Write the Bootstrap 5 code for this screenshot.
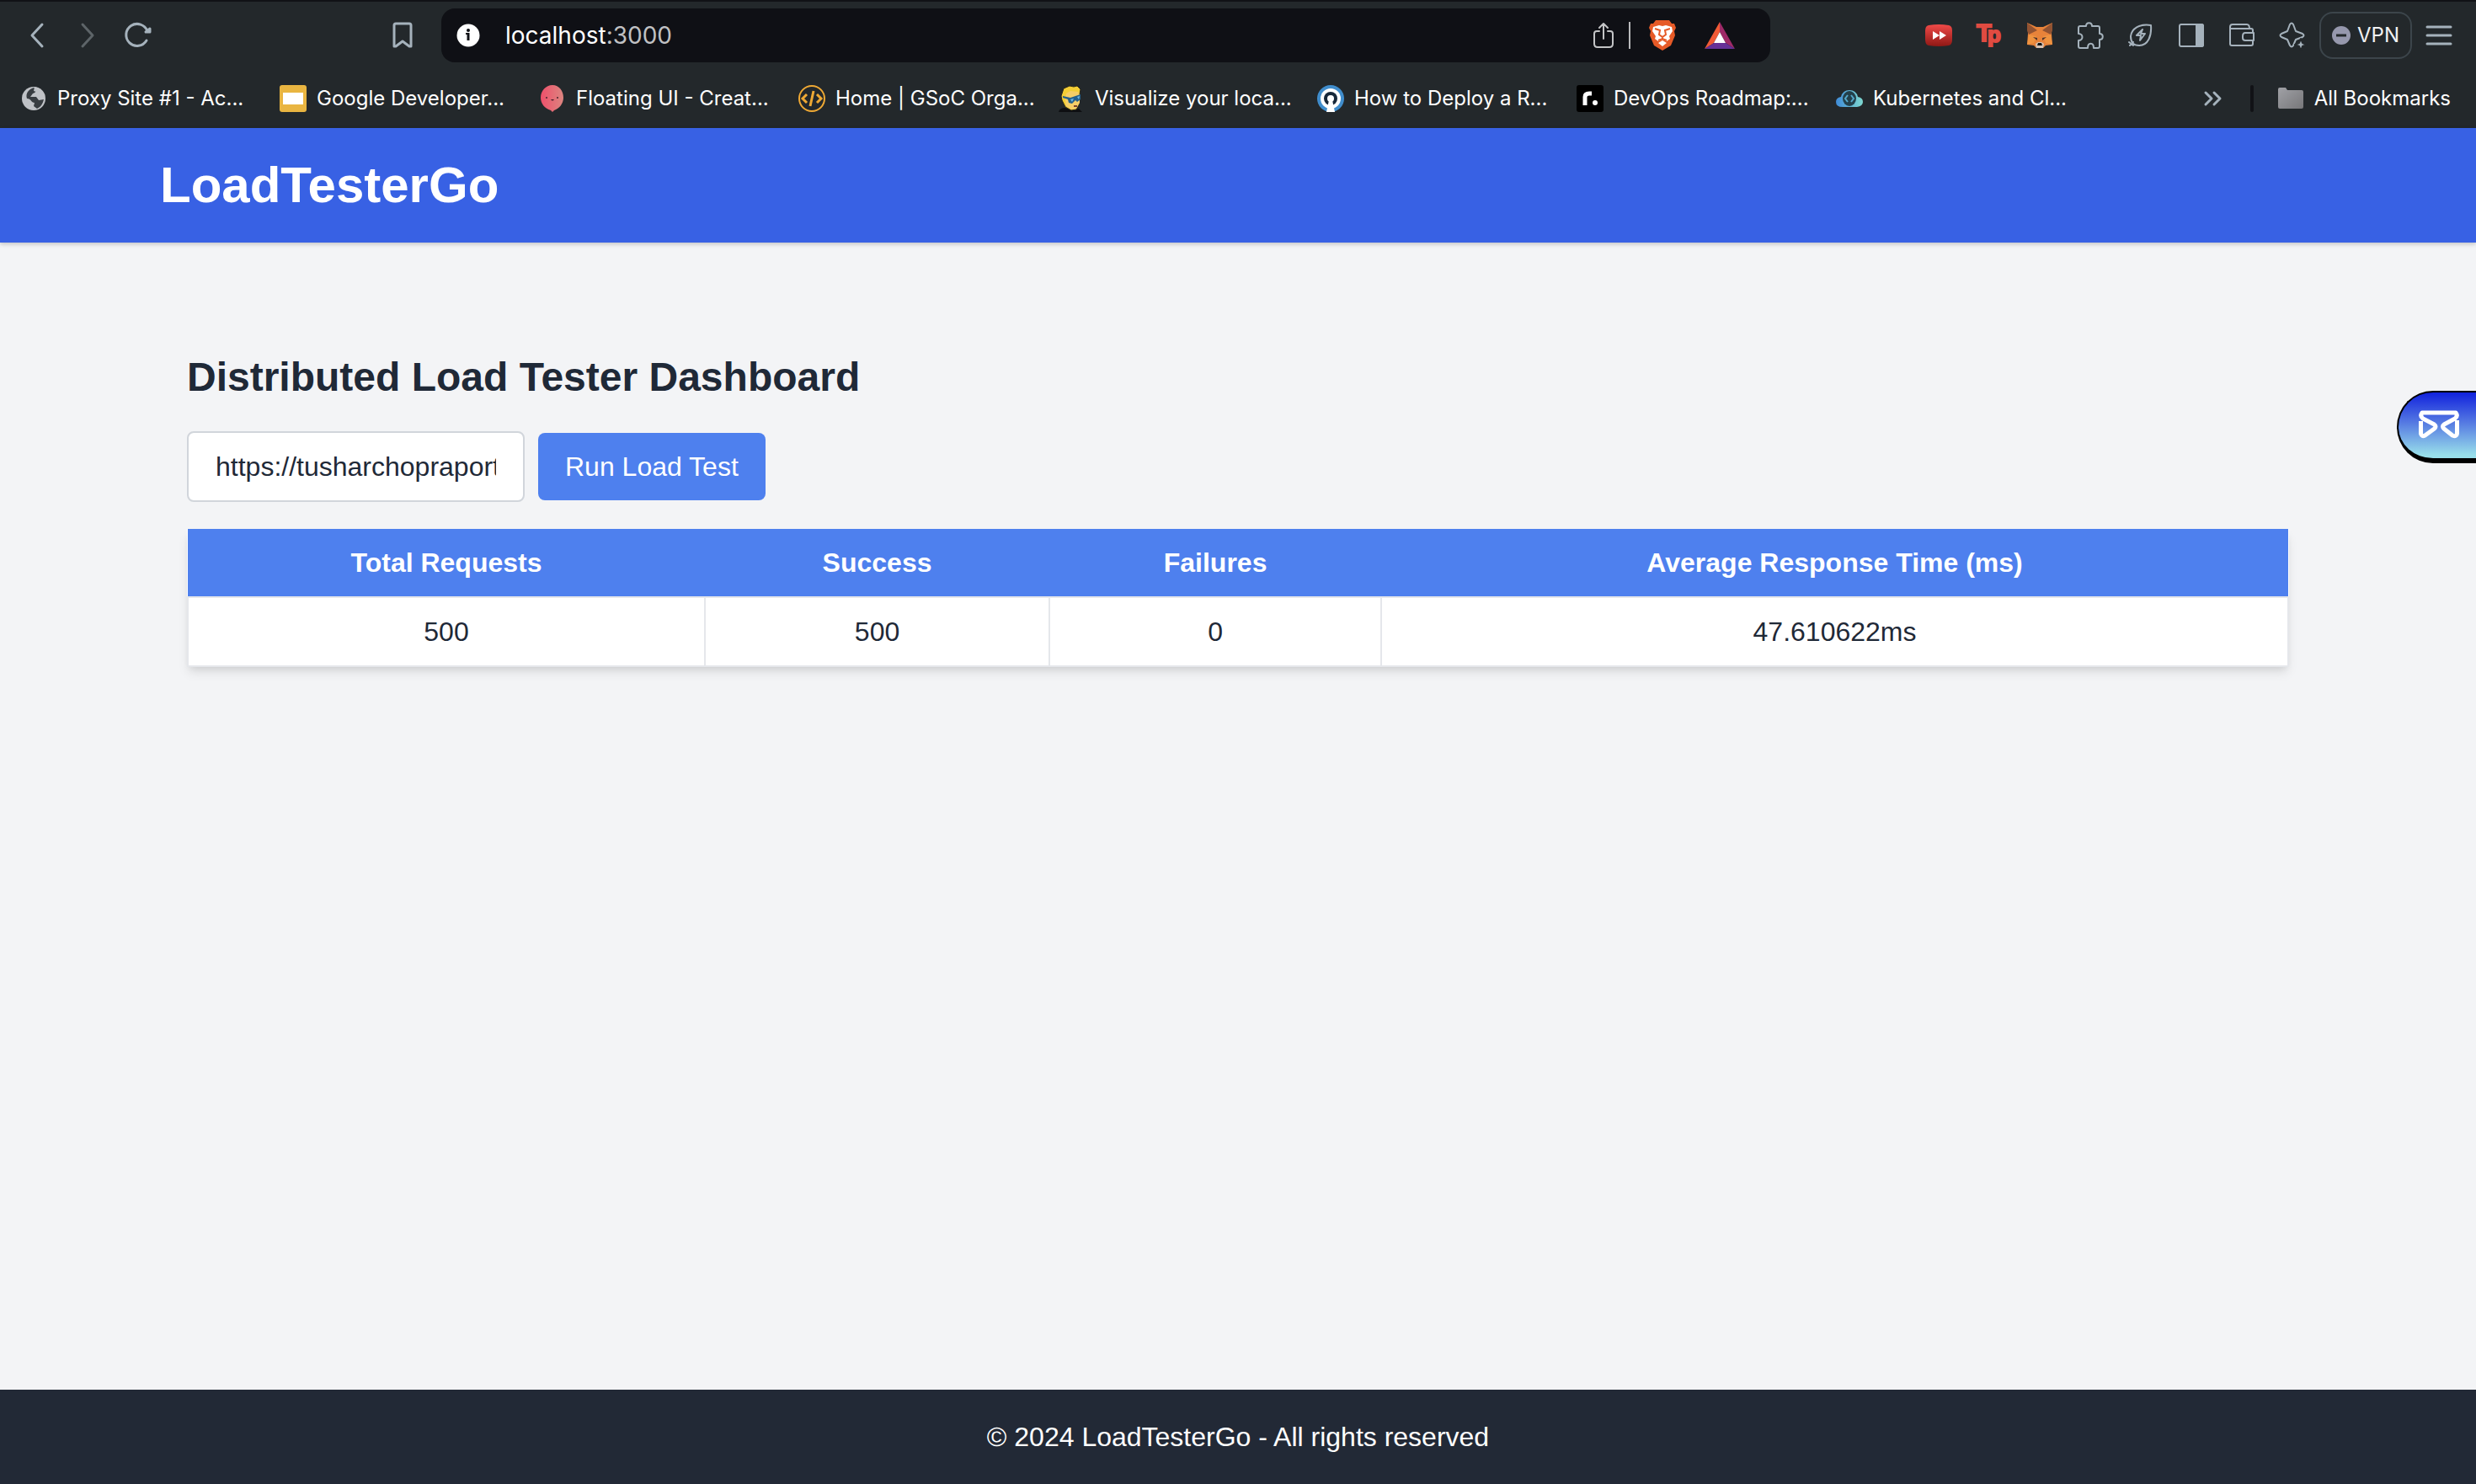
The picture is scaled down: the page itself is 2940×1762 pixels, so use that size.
<!DOCTYPE html>
<html lang="en">
<head>
<meta charset="utf-8">
<meta name="viewport" content="width=device-width, initial-scale=1">
<title>LoadTesterGo</title>
<link href="https://cdn.jsdelivr.net/npm/bootstrap@5.3.0/dist/css/bootstrap.min.css" rel="stylesheet">
<style>
  body { font-family: "Liberation Sans", Arial, sans-serif; font-size: 32px; line-height: 48px; color: #1f2937; background: #f3f4f6; }
  svg { display: block; flex: none; overflow: visible; }

  /* Browser chrome */
  .browser-ui { font-family: Inter, sans-serif; background: #23282b; border-top: 2px solid #111216; color: #fff; font-size: 24px; line-height: 32px; }
  .toolbar { height: 80px; }
  .nav-tools { flex: 0 0 524px; padding: 0 16px 0 14px; }
  .ext-tools { flex: 0 0 838px; padding-right: 14px; }
  .tool-btn { width: 60px; height: 60px; padding: 0; border: 0; background: none; color: #a5b2bc; display: flex; align-items: center; justify-content: center; }
  .tool-btn:disabled { color: #5d6468; }
  .line-art { fill: none; stroke: currentColor; stroke-width: 2; stroke-linecap: round; stroke-linejoin: round; }
  .line-bold { stroke-width: 3; }
  .address { height: 64px; border-radius: 16px; background: #0f1015; padding: 0 30px 0 16px; font-size: 28px; }
  .address .host { margin-left: 28px; }
  .address .port { color: #c0c1c3; }
  .address .rule { width: 2px; height: 32px; background: #b8b9bb; }
  .vpn-btn { width: 110px; height: 56px; margin: 0 2px; padding: 0; border: 2px solid #3c454b; border-radius: 16px; background: none; color: #f0f1f2; font-size: 24px; gap: 8px; }
  .bookmarks { height: 70px; padding: 0 30px 0 24px; }
  .bookmarks a { color: #fff; text-decoration: none; gap: 12px; white-space: nowrap; }
  .bookmark { width: 308px; }
  .all-rule { width: 4px; height: 32px; border-radius: 2px; background: #111216; margin: 0 28px 0 14px; }

  /* Page */
  .site-header { background: #3861e4; box-shadow: 0 2px 6px rgba(0,0,0,.1), 0 2px 4px rgba(0,0,0,.1); padding: 32px 0; }
  .site-header h1 { font-size: 60px; line-height: 72px; font-weight: 700; color: #fff; }
  .page-width { width: 100%; max-width: 2560px; margin: 0 auto; }
  .dashboard { padding: 128px 32px 64px; }
  .dashboard h2 { font-size: 48px; line-height: 64px; font-weight: 700; margin-bottom: 32px; }
  .load-form { gap: 16px; margin-bottom: 32px; }
  .load-form .form-control { width: 401px; padding: 16px 32px; border: 2px solid #d1d5db; border-radius: 8px; font-size: 32px; line-height: 48px; height: 84px; color: #1f2937; }
  .load-form .btn { padding: 16px 32px; border: 0; border-radius: 8px; font-size: 32px; line-height: 48px; background: #4e80ee; color: #fff; }
  .results { width: 100%; border-collapse: collapse; background: #fff; text-align: center; box-shadow: 0 8px 12px -2px rgba(0,0,0,.1), 0 4px 8px -4px rgba(0,0,0,.1); }
  .results th, .results td { padding: 16px 32px; }
  .results th { background: #4e80ee; color: #fff; font-weight: 700; }
  .results td { border: 2px solid #e5e7eb; }
  .site-footer { background: #222936; color: #fff; padding: 32px 0; }
  .mail-tab { position: absolute; right: 0; top: 464px; width: 94px; height: 86px; padding: 0 0 2px 24px; border: 2px solid #000; border-right: 0; border-bottom-width: 6px; border-radius: 43px 0 0 43px; background: linear-gradient(#1122dd, #5478e2 45%, #98deea 95%); }
</style>
<script src="https://cdn.jsdelivr.net/npm/bootstrap@5.3.0/dist/js/bootstrap.bundle.min.js"></script>
</head>
<body class="d-flex flex-column min-vh-100 position-relative">

<div class="browser-ui">
  <div class="toolbar d-flex align-items-center">
    <div class="nav-tools d-flex">
      <button class="tool-btn" aria-label="Back"><svg class="line-art line-bold" width="32" height="32" viewBox="0 0 32 32"><path d="M22 3 10 16 22 29"/></svg></button>
      <button class="tool-btn" aria-label="Forward" disabled><svg class="line-art line-bold" width="32" height="32" viewBox="0 0 32 32"><path d="M10 3 22 16 10 29"/></svg></button>
      <button class="tool-btn" aria-label="Reload"><svg class="line-art line-bold" width="32" height="32" viewBox="0 0 32 32"><path d="M26 22A13 13 0 1 1 27 11"/><path d="M25 12h5V8z" fill="currentColor"/></svg></button>
      <button class="tool-btn ms-auto" aria-label="Bookmark"><svg class="line-art line-bold" width="32" height="32" viewBox="0 0 32 32"><path d="M6 4q0-2 2-2h16q2 0 2 2v25h-2L16 23 8 29H6z"/></svg></button>
    </div>
    <div class="address d-flex align-items-center flex-grow-1">
      <svg width="32" height="32" viewBox="0 0 32 32"><circle cx="16" cy="16" r="13.500" fill="#fff"/><circle cx="16" cy="10" r="2" fill="#0f1015"/><path d="M13 14h3v8" fill="none" stroke="#0f1015" stroke-width="2"/><path d="M16 13v9" stroke="#0f1015" stroke-width="3"/></svg>
      <span class="host">localhost<span class="port">:3000</span></span>
      <button class="tool-btn ms-auto" aria-label="Share"><svg class="line-art" width="32" height="32" viewBox="0 0 32 32" style="color:#c3c4c6"><path d="M11 11H8q-3 0-3 3v12q0 4 4 4h14q4 0 4-4V14q0-3-3-3h-3M16 20V2M11 7l5-5 5 5"/></svg></button>
      <span class="rule"></span>
      <button class="tool-btn ms-2" aria-label="Brave Shields"><svg width="36" height="36" viewBox="0 0 36 36"><path d="M10 0h16l3 4h3l2 5-2 4 1 5-5 12-10 6-10-6-5-12 1-5-2-4 2-5h3z" fill="#e65a27"/><path d="m7 8 7-2 4 1 4-1 7 2 1 5-4 6 1 3-4 3-5-2-5 2-4-3 1-3-4-6zM13 27l5-3 5 3-5 4z" fill="#fff"/><path d="m9 10 6 2-1 5 4 3 4-3-1-5 6-2M18 20v3M13 24l5-2 5 2" fill="none" stroke="#e65a27" stroke-width="2"/></svg></button>
      <button class="tool-btn ms-2" aria-label="Brave Rewards"><svg width="36" height="32" viewBox="0 0 36 32"><path d="M18 0v12L11 25 0 32z" fill="#f05a35"/><path d="M18 0v12l7 13 11 7z" fill="#9e2a67"/><path d="m0 32 11-7h14l11 7z" fill="#663096"/><path d="m18 12 7 13H11z" fill="#fff"/></svg></button>
    </div>
    <div class="ext-tools d-flex align-items-center justify-content-end">
      <button class="tool-btn" aria-label="Video speed"><svg width="32" height="32" viewBox="0 0 32 32"><defs><linearGradient id="redFill" x2="0" y2="1"><stop stop-color="#f04a48"/><stop offset="1" stop-color="#8f1815"/></linearGradient></defs><path d="M4 4q12-2 24 0 4 1 4 6v11q0 6-4 7-12 2-24 0-4-1-4-7V10q0-5 4-6z" fill="url(#redFill)"/><path d="m9 11 8 5v-5l8 5-8 5v-5l-8 5z" fill="#fff"/></svg></button>
      <button class="tool-btn" aria-label="Tp"><svg width="32" height="32" viewBox="0 0 32 32"><g fill="#e04b41" stroke="#e04b41" stroke-width="2" font-family="Liberation Sans" font-weight="700"><text x="1" y="23" font-size="29">T</text><text x="14" y="24" font-size="26">p</text></g></svg></button>
      <button class="tool-btn" aria-label="MetaMask"><svg width="32" height="32" viewBox="0 0 32 32"><path d="m1 1 11 5h8l11-5-1 13 1 13-8 1-3 3h-8l-3-3-8-1 1-13z" fill="#e8833a"/><path d="m1 1 12 9-10 5-2-5zM31 1 19 10l10 5 2-5z" fill="#925332"/><path d="m3 15 9 2-3 8-8 2zM29 15l-9 2 3 8 8 2z" fill="#ef9340"/><path d="m8 18 5 1v3zM24 18l-5 1v3z" fill="#4d342c"/><path d="m11 26 3-2h4l3 2-1 5h-8z" fill="#d6c3b5"/><path d="M14 25h4l1 3h-6z" fill="#161616"/></svg></button>
      <button class="tool-btn" aria-label="Extensions"><svg class="line-art" width="32" height="32" viewBox="0 0 32 32"><path d="M4 5h7c0-5 7-5 7 0h7q2 0 2 2v7c5 0 5 7 0 7v8q0 2-2 2h-5c0-7-7-7-7 0H4q-2 0-2-2v-7c6 0 6-8 0-8V7q0-2 2-2z"/></svg></button>
      <button class="tool-btn" aria-label="Energy saver"><svg class="line-art" width="32" height="32" viewBox="0 0 32 32"><path d="M28 4C14 2 5 8 4 17c0 5 2 11 10 11C25 28 29 16 28 4zM3 28l4-4M2 24l5 4M18 9l-7 7h5l-1 6 6-8h-5z"/></svg></button>
      <button class="tool-btn" aria-label="Side panel"><svg class="line-art" width="32" height="32" viewBox="0 0 32 32"><rect x="2" y="3" width="28" height="26" rx="2"/><path d="M22 3h6q2 0 2 2v22q0 2-2 2h-6z" fill="currentColor"/></svg></button>
      <button class="tool-btn" aria-label="Wallet"><svg class="line-art" width="32" height="32" viewBox="0 0 32 32"><path d="M29 13v-3q0-2-2-2H2V6q0-3 3-3h17q3 0 3 5M2 8v18q0 2 2 2h23q2 0 2-2v-4"/><path d="M30 13H20q-3 0-3 4v2q0 3 3 3h10z"/></svg></button>
      <button class="tool-btn" aria-label="Leo AI"><svg class="line-art" width="32" height="32" viewBox="0 0 32 32"><path d="M13 3q2-3 4 0l3 8 8 3q3 2 0 4l-8 3-3 7q-2 3-4 0l-3-7-7-3q-3-2 0-4l7-3z"/><path d="m26 20 2 5 5 2-5 2-2 5-2-5-5-2 5-2z" fill="currentColor" stroke="#23282b"/></svg></button>
      <button class="vpn-btn d-flex align-items-center justify-content-center"><svg width="22" height="22" viewBox="0 0 22 22"><circle cx="11" cy="11" r="11" fill="#9698ad"/><path d="M5 11h12" stroke="#23282b" stroke-width="3"/></svg>VPN</button>
      <button class="tool-btn" aria-label="Menu"><svg class="line-art line-bold" width="32" height="32" viewBox="0 0 32 32"><path d="M2 6h28M2 16h28M2 26h28"/></svg></button>
    </div>
  </div>

  <nav class="bookmarks d-flex align-items-center" aria-label="Bookmarks">
    <a href="#" class="bookmark d-flex align-items-center"><svg width="32" height="32" viewBox="0 0 32 32"><circle cx="16" cy="16" r="14" fill="#bfc2c6"/><path d="M16 3c5 2 3 6-1 7l-3 4h7l3 4 6-1c-1 4-3 9-8 11l-4-3 1-4c-4 0-4-5-9-5-2-6 2-11 8-13z" fill="#383d41"/><path d="M17 2c7 2 11 5 12 12l-5 1-3-3 1-3-6-2z" fill="#bfc2c6"/></svg>Proxy Site #1 - Ac...</a>
    <a href="#" class="bookmark d-flex align-items-center"><svg width="32" height="32" viewBox="0 0 32 32"><rect width="32" height="32" rx="3" fill="#e9b541"/><path d="M4 9h24v14H4z" fill="#fff"/></svg>Google Developer...</a>
    <a href="#" class="bookmark d-flex align-items-center"><svg width="32" height="32" viewBox="0 0 32 32"><defs><linearGradient id="balloon" x2="1"><stop stop-color="#ef506b"/><stop offset="1" stop-color="#dc8580"/></linearGradient></defs><path d="M16 0c8 0 13 7 13 15 0 7-5 13-11 15l-2 2-2-2C7 28 2 22 2 15 2 7 8 0 16 0z" fill="url(#balloon)"/><circle cx="9" cy="15" r="1" fill="#45202b"/><circle cx="22" cy="15" r="1" fill="#45202b"/><path d="M14 17q2 3 4 0z" fill="#45202b"/></svg>Floating UI - Creat...</a>
    <a href="#" class="bookmark d-flex align-items-center"><svg width="32" height="32" viewBox="0 0 32 32" fill="none" stroke="#efa934" stroke-width="2"><circle cx="16" cy="16" r="15"/><path d="m10 11-5 5 5 5M22 11l5 5-5 5M18 7l-4 18" stroke-width="3"/></svg>Home | GSoC Orga...</a>
    <a href="#" class="bookmark d-flex align-items-center"><svg width="32" height="32" viewBox="0 0 32 32"><path d="M1 32q1-5 8-5l8 3 8-2 4 4z" fill="#0e0f12"/><path d="M4 13 7 4l7-3 5 1 4-1 4 4-1 6v10l-4 8-6 1-7-4-4-8z" fill="#f3ce35" stroke="#292719"/><path d="m9 18 1-8 5-3 9 1 2 4v9l-4 7-6 1-6-4z" fill="#f5ce67"/><path d="m6 13 9 2 12-4v6l-4 3-2-2-4 4-4-1-1-4-6-2z" fill="#23608d"/><path d="m15 17 4-1-2 4zM23 14l3-1-1 4z" fill="#6ab8e8"/><path d="M19 25h4" stroke="#7b442d" stroke-width="2"/></svg>Visualize your loca...</a>
    <a href="#" class="bookmark d-flex align-items-center"><svg width="32" height="32" viewBox="0 0 32 32"><circle cx="16" cy="16" r="16" fill="#408dcc"/><circle cx="16" cy="16" r="12" fill="#fff"/><circle cx="16" cy="16" r="8" fill="#17283a"/><path d="m14 18-3 14h10l-3-14z" fill="#fff"/><circle cx="16" cy="16" r="4" fill="#fff"/></svg>How to Deploy a R...</a>
    <a href="#" class="bookmark d-flex align-items-center"><svg width="32" height="32" viewBox="0 0 32 32"><rect width="32" height="32" rx="3" fill="#000"/><path d="M10 24V14q0-4 5-4h3" fill="none" stroke="#fff" stroke-width="5"/><circle cx="22" cy="21" r="3" fill="#fff"/></svg>DevOps Roadmap:...</a>
    <a href="#" class="bookmark d-flex align-items-center"><svg width="32" height="32" viewBox="0 0 32 32"><defs><linearGradient id="cloud" x2="1"><stop stop-color="#3f8bd8"/><stop offset="1" stop-color="#7ed8cf"/></linearGradient></defs><path d="M8 26q-8 0-8-6 0-5 6-6Q8 6 16 6t10 8q6 1 6 6t-7 6z" fill="url(#cloud)"/><ellipse cx="16" cy="16" rx="8" ry="9" fill="#23404b"/><path d="m14 12-3 4 3 4M18 12l3 4-3 4" fill="none" stroke="#55a8cb" stroke-width="2"/></svg>Kubernetes and Cl...</a>
    <button class="tool-btn ms-auto" aria-label="More bookmarks"><svg class="line-art line-bold" width="24" height="24" viewBox="0 0 24 24"><path d="m3 5 7 7-7 7M13 5l7 7-7 7"/></svg></button>
    <span class="all-rule"></span>
    <a href="#" class="d-flex align-items-center"><svg width="32" height="32" viewBox="0 0 32 32"><defs><linearGradient id="folder" x2="1" y2="1"><stop stop-color="#a0a1a6"/><stop offset="1" stop-color="#77777a"/></linearGradient></defs><path d="M1 5q0-2 2-2h7l2 3h17q2 0 2 2v18q0 2-2 2H3q-2 0-2-2z" fill="url(#folder)"/></svg>All Bookmarks</a>
  </nav>
</div>

<header class="site-header">
  <div class="page-width"><h1 class="m-0">LoadTesterGo</h1></div>
</header>

<main class="dashboard page-width flex-grow-1">
  <h2 class="mt-0">Distributed Load Tester Dashboard</h2>
  <form class="load-form d-flex align-items-center">
    <label for="targetUrl" class="visually-hidden">URL</label>
    <input id="targetUrl" type="text" class="form-control" value="https://tusharchopraportfolio">
    <button type="button" class="btn">Run Load Test</button>
  </form>
  <table class="results">
    <thead><tr><th scope="col">Total Requests</th><th scope="col">Success</th><th scope="col">Failures</th><th scope="col">Average Response Time (ms)</th></tr></thead>
    <tbody><tr><td>500</td><td>500</td><td>0</td><td>47.610622ms</td></tr></tbody>
  </table>
</main>

<footer class="site-footer text-center">© 2024 LoadTesterGo - All rights reserved</footer>

<button class="mail-tab d-flex align-items-center" aria-label="Mail">
  <svg width="48" height="34" viewBox="0 0 48 34" fill="none" stroke="#fff" stroke-width="5" stroke-linejoin="round"><path d="M2.500 13v15q1 4 5 2l11-8q3-3 0-5L5 10Q1 7 4 3h40q3 4-1 7l-13 7q-3 2 0 5l10 8q5 2 5.500-2V12"/></svg>
</button>
</body>
</html>
